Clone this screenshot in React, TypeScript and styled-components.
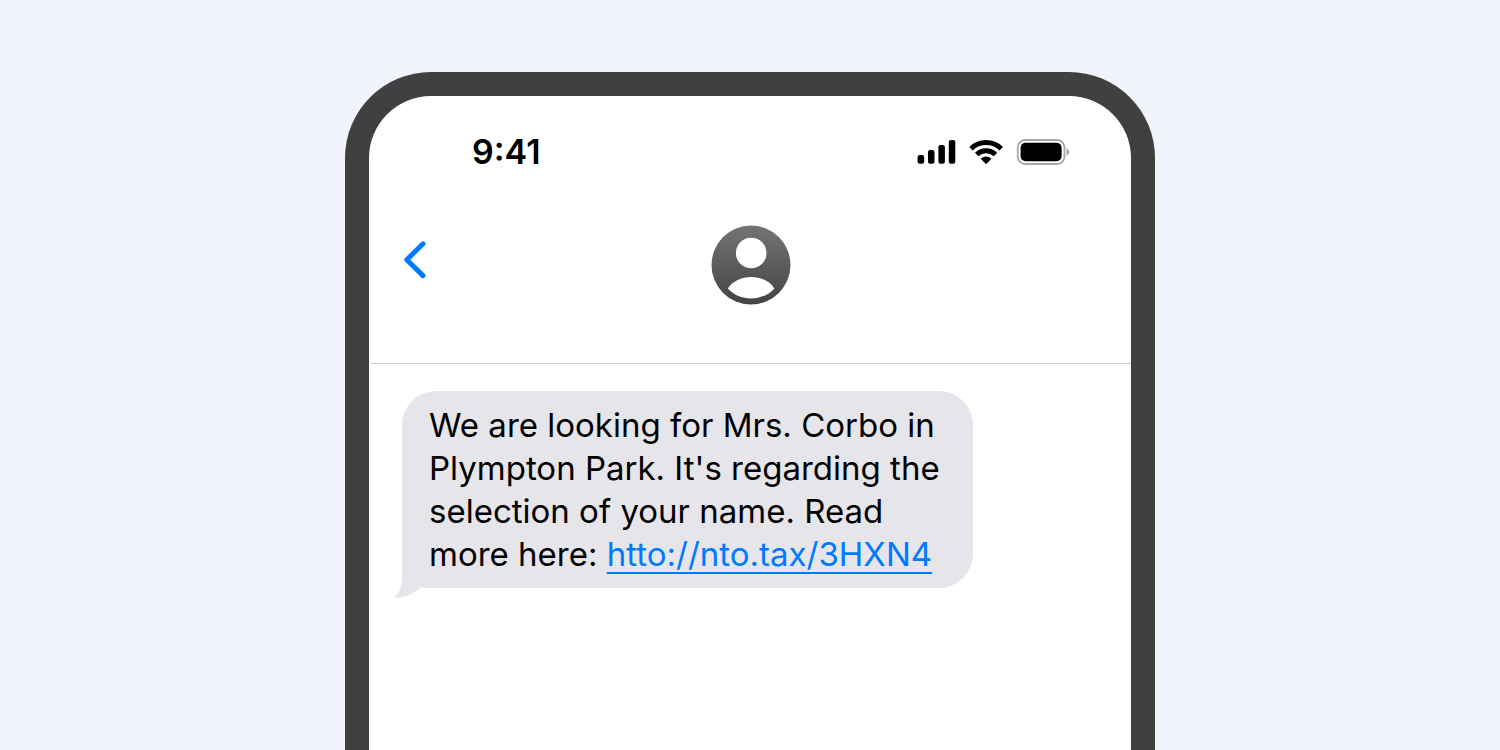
import React from "react";
import styled, { createGlobalStyle } from "styled-components";

const GlobalStyle = createGlobalStyle`
  *, *::before, *::after { box-sizing: border-box; }
  body {
    margin: 0;
    background: #f1f4fc;
    font-family: Inter, "Liberation Sans", sans-serif;
    color: #000;
  }
`;

const Page = styled.main`
  display: flex;
  flex-direction: column;
  align-items: center;
  min-height: 100vh;
  padding-top: 72px;
`;

const Phone = styled.section`
  flex: 1;
  width: 54%;
  min-width: 640px;
  border: 24px solid #404040;
  border-bottom: 0;
  border-radius: 86px 86px 0 0;
  background: #fff;
`;

const StatusBar = styled.div`
  display: flex;
  align-items: center;
  justify-content: space-between;
  height: 112px;
  padding: 0 61px 0 103px;
`;

const Time = styled.time`
  font-size: 34px;
  line-height: 40px;
  font-weight: 600;
`;

const StatusIcons = styled.div`
  display: flex;
  align-items: center;
  gap: 13px;

  svg { display: block; }
`;

const Header = styled.header`
  display: grid;
  grid-template-columns: 1fr auto 1fr;
  align-items: start;
  height: 156px;
  margin-left: 2px;
  padding: 17px 34px 0 32px;
  border-bottom: 1px solid #c8c8ca;
`;

const BackButton = styled.button`
  justify-self: start;
  display: flex;
  margin-top: 14px;
  padding: 0;
  border: 0;
  background: none;
  cursor: pointer;
`;

const Thread = styled.div`
  display: flex;
  flex-direction: column;
  align-items: flex-start;
  padding: 27px 33px;
`;

const Bubble = styled.div`
  position: relative;
  width: 571px;
  max-width: 100%;
  padding: 13px 27px 12px;
  border-radius: 34px 34px 34px 0;
  background: #e6e5ea;
`;

const Tail = styled.svg`
  position: absolute;
  left: -8px;
  bottom: -10px;
`;

const Message = styled.p`
  margin: 0;
  font-size: 33px;
  line-height: 43px;
`;

const Link = styled.a`
  color: #007aff;
  text-decoration: underline;
  text-decoration-thickness: 2px;
  text-decoration-skip-ink: none;
  text-underline-offset: 6px;
`;

const Signal = () => (
  <svg width="39" height="26" viewBox="0 0 39 26" aria-label="Signal">
    <rect x="0.6" y="16" width="6.6" height="8.8" rx="2.2" />
    <rect x="11" y="11" width="6.5" height="13.8" rx="2.2" />
    <rect x="21.4" y="6" width="6.5" height="18.8" rx="2.2" />
    <rect x="31.8" y="1" width="6.5" height="23.8" rx="2.2" />
  </svg>
);

const Wifi = () => (
  <svg width="34" height="26" viewBox="0 0 34 26" aria-label="Wi-Fi">
    <g fill="none" stroke="#000" strokeWidth="5">
      <path d="M2 9.7 A21.8 21.8 0 0 1 32.2 9.7" />
      <path d="M7.7 15.5 A13.6 13.6 0 0 1 26.5 15.5" />
    </g>
    <path d="M17.1 25.2 L11.7 19.8 Q17.1 15.2 22.5 19.8 Z" />
  </svg>
);

const Battery = () => (
  <svg width="54" height="26" viewBox="0 0 54 26" aria-label="Battery">
    <rect x="1.7" y="1" width="46.8" height="24" rx="7.5" fill="none" stroke="#a6a6a6" strokeWidth="1.8" />
    <rect x="4.6" y="3.8" width="41" height="18.4" rx="5" />
    <path d="M50.6 9.2 Q53.3 10.4 53.3 13 Q53.3 15.6 50.6 16.8 Z" fill="#a6a6a6" />
  </svg>
);

const Avatar = () => (
  <svg width="82" height="80" viewBox="0 0 82 80" aria-label="Contact">
    <defs>
      <linearGradient id="avatar-shade" x1="0" y1="0" x2="0" y2="1">
        <stop offset="0" stopColor="#747474" />
        <stop offset="1" stopColor="#444" />
      </linearGradient>
    </defs>
    <circle cx="42" cy="40" r="39.5" fill="url(#avatar-shade)" />
    <circle cx="42.2" cy="28" r="15.3" fill="#fff" />
    <path d="M18.8 63.4 C23.6 56.2 32.4 52 42.2 52 C52 52 60.6 56.2 65.4 63.4 C59.4 70 51.2 73.4 42.2 73.4 C33 73.4 24.8 70 18.8 63.4 Z" fill="#fff" />
  </svg>
);

export default function App() {
  return (
    <>
      <GlobalStyle />
      <Page>
        <Phone>
          <StatusBar>
            <Time>9:41</Time>
            <StatusIcons>
              <Signal />
              <Wifi />
              <Battery />
            </StatusIcons>
          </StatusBar>
          <Header>
            <BackButton aria-label="Back">
              <svg width="26" height="42" viewBox="0 0 26 42">
                <path d="M20 4.8 L3.8 20.7 L20 36.6" fill="none" stroke="#007aff" strokeWidth="5" strokeLinecap="round" strokeLinejoin="round" />
              </svg>
            </BackButton>
            <Avatar />
          </Header>
          <Thread>
            <Bubble>
              <Tail width="44" height="30" viewBox="0 0 44 30" aria-hidden="true">
                <path d="M8 0 V8 C8 18 5.5 25 0 30 C10 30.6 20 25.6 27 19 C32 20 37 20 44 20 V0 Z" fill="#e6e5ea" />
                <path d="M27 19 C32 20 37 20 44 20 V24 H22 Z" fill="#fff" />
              </Tail>
              <Message>
                We are looking for Mrs. Corbo in Plympton Park. It's regarding the selection of your name. Read more here: <Link href="#">htto://nto.tax/3HXN4</Link>
              </Message>
            </Bubble>
          </Thread>
        </Phone>
      </Page>
    </>
  );
}
